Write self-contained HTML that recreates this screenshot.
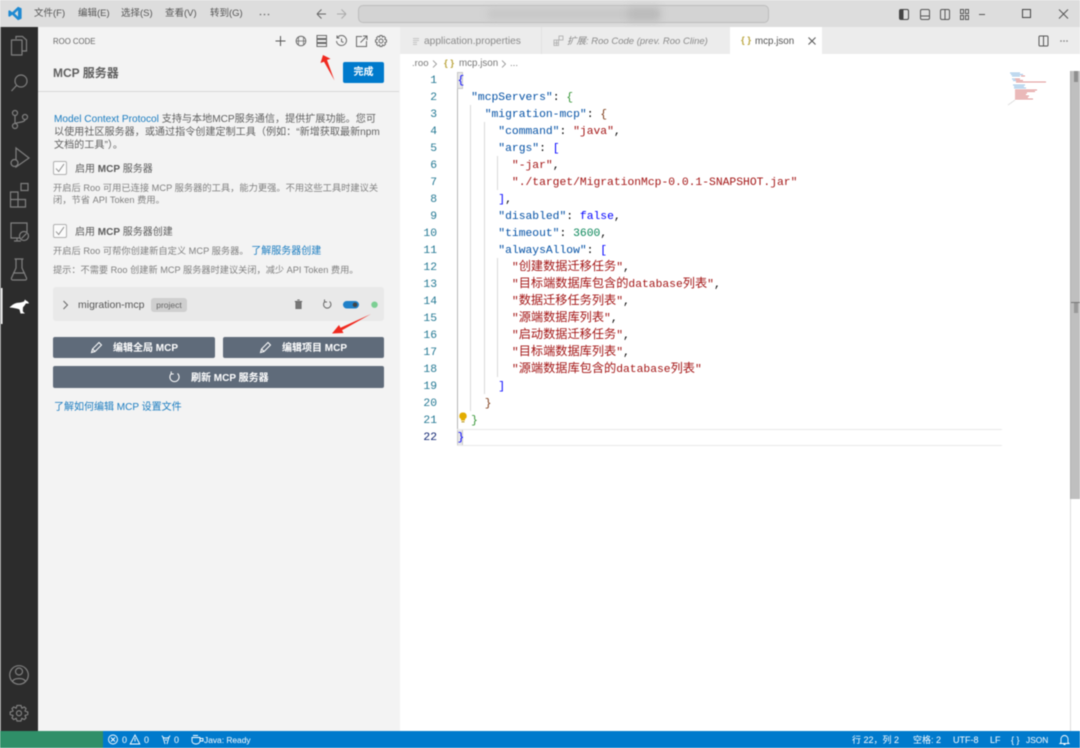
<!DOCTYPE html>
<html lang="zh"><head><meta charset="utf-8"><title>MCP</title>
<style>
*{box-sizing:border-box}
html,body{margin:0;padding:0}
body{width:1080px;height:748px;position:relative;overflow:hidden;background:#fff;font-family:"Liberation Sans","Noto Sans CJK SC",sans-serif;color:#616161}
.a{position:absolute;white-space:nowrap}
.blur{filter:blur(.4px)}
svg{position:absolute;overflow:visible}
.ln{position:absolute;left:400px;width:37px;margin-top:1px;text-align:right;color:#237893;font-family:"Liberation Mono",monospace;font-size:11.33px;line-height:17px}
.cl{position:absolute;white-space:pre;left:457.5px;height:17px;margin-top:1px;font-family:"Liberation Mono","Noto Sans CJK SC",monospace;font-size:11.33px;line-height:17px;color:#000}
.cl i{font-style:normal;font-size:12.2px;line-height:0;font-family:"Noto Sans CJK SC",sans-serif}
.k{color:#0451a5}.s{color:#a31515}.b{color:#0000ff}.n{color:#098658}
.btn{position:absolute;background:#5f6b7a;border-radius:2px}
.bt{position:absolute;white-space:nowrap;font-size:10px;line-height:15px;color:#fff;font-weight:bold}
.gd{position:absolute;width:1px;background:#d9d9d9}
.ai{fill:none;stroke:#808080;stroke-width:1.2}
.ti{fill:none;stroke:#6a6a6a;stroke-width:1}
.m{position:absolute;top:7px;font-size:9.5px;line-height:14px;color:#555;white-space:nowrap}
.st{position:absolute;top:734px;font-size:9px;line-height:13px;color:#fff;white-space:nowrap}
</style></head><body>
<div class="blur">
<!-- title bar -->
<div class="a" style="left:0;top:0;width:1080px;height:27px;background:#dddddd"></div>
<svg style="left:8px;top:6px" width="14" height="15" viewBox="0 0 14 15"><path d="M10 .8 13.6 2.400V12.600L10 14.200 4.200 8.800 1.600 10.800.4 10.200V4.800L1.600 4.200 4.200 6.200ZM10 4.400 6.600 7.500 10 10.600Z" fill="#1f8ad2"/></svg>
<div class="m" style="left:34px">文件(F)</div>
<div class="m" style="left:78px">编辑(E)</div>
<div class="m" style="left:121px">选择(S)</div>
<div class="m" style="left:165px">查看(V)</div>
<div class="m" style="left:210px">转到(G)</div>
<svg style="left:259px;top:13px" width="12" height="3" viewBox="0 0 12 3"><circle cx="1.500" cy="1.500" r=".8" fill="#666"/><circle cx="5.500" cy="1.500" r=".8" fill="#666"/><circle cx="9.500" cy="1.500" r=".8" fill="#666"/></svg>
<svg style="left:316px;top:8px" width="32" height="12" viewBox="0 0 32 12"><path d="M1 6H10M1 6 5.500 1.500M1 6 5.500 10.500" fill="none" stroke="#666" stroke-width="1"/><path d="M30 6H21M30 6 25.500 1.500M30 6 25.500 10.500" fill="none" stroke="#aaa" stroke-width="1"/></svg>
<div class="a" style="left:358px;top:5px;width:411px;height:18px;background:#d3d3d3;border:1px solid #bdbdbd;border-radius:5px"></div>
<div class="a" style="left:488px;top:9px;width:170px;height:10px;background:#c6c6c6;filter:blur(4px)"></div>
<div class="a" style="left:628px;top:8px;width:32px;height:12px;background:#bababa;filter:blur(4px)"></div>
<svg style="left:898px;top:8px" width="75" height="13" viewBox="0 0 75 13"><rect x="1.500" y="1.500" width="9" height="10" rx="1.500" fill="none" stroke="#444"/><rect x="1.500" y="1.500" width="4" height="10" fill="#444"/><rect x="22.500" y="1.500" width="9" height="10" rx="1.500" fill="none" stroke="#555"/><path d="M22.500 8H31.500" stroke="#555"/><rect x="42.500" y="1.500" width="9" height="10" rx="1.500" fill="none" stroke="#555"/><path d="M47 1.500V11.500" stroke="#555"/><rect x="62.500" y="1.500" width="3" height="4" fill="none" stroke="#555"/><rect x="62.500" y="7.500" width="3" height="4" fill="none" stroke="#555"/><rect x="67.500" y="1.500" width="3" height="4" fill="none" stroke="#555"/><rect x="67.500" y="7.500" width="3" height="4" fill="none" stroke="#555"/></svg>
<svg style="left:975px;top:8px" width="100" height="12" viewBox="0 0 100 12"><path d="M4 6.500H10" stroke="#555"/><rect x="47.500" y="1.500" width="8" height="8" fill="none" stroke="#444"/><path d="M84 1.500 93 10.500M93 1.500 84 10.500" stroke="#555"/></svg>

<!-- activity bar -->
<div class="a" style="left:0;top:27px;width:38px;height:704px;background:#2c2c2c"></div>
<div class="a" style="left:0;top:27px;width:1px;height:704px;background:#888"></div>
<svg style="left:0;top:27px" width="38" height="704" viewBox="0 0 38 704">
<g class="ai">
<g transform="translate(0 2)"><path d="M16 10V7.500H22.500L26.500 11V22H22"/><path d="M11.500 11H22V26H11.500Z" stroke-linejoin="round"/></g>
<g transform="translate(0 1)"><circle cx="21" cy="53" r="6"/><path d="M16.500 57.500 11.500 63"/></g>
<g><circle cx="15" cy="86" r="2.500"/><circle cx="15" cy="99" r="2.500"/><circle cx="25" cy="90" r="2.500"/><path d="M15 88.500V96.500M25 92.500C25 96 15 95 15 97"/></g>
<g transform="translate(0 3)"><path d="M16 118V137L29 128Z"/><circle cx="14.500" cy="133" r="3.500" fill="#2c2c2c"/></g>
<g transform="translate(0 4)"><path d="M10.500 161H18V168.500H25.500V176H10.500ZM18 168.500H10.500M18 168.500V176"/><rect x="21" y="152.500" width="7" height="7"/></g>
<g transform="translate(0 -3)"><path d="M23 214H11V199H27V208M14 217H21M17 214V217"/><circle cx="24" cy="212" r="4.500" fill="#2c2c2c"/><path d="M21.500 214.500 26.500 209.500"/></g>
<g transform="translate(0 -10)"><path d="M16 242V251L11.500 261C11 262.500 12 263 13 263H25C26 263 27 262.500 26.500 261L22 251V242M14.500 242H23.500M13 256H25"/></g>
<g transform="translate(0 -1)"><circle cx="19" cy="649" r="9.300"/><circle cx="19" cy="645.500" r="3.500"/><path d="M12.500 655.500C14 651.500 24 651.500 25.500 655.500"/></g>
<g transform="translate(0 -5)"><path d="M17 683.500H21L21.800 686.200 24.300 685 26 686.500 25 689 27.800 690V692.500L25 693.500 26 696 24.300 697.500 21.800 696.300 21 699H17L16.200 696.300 13.700 697.500 12 696 13 693.500 10.200 692.500V690L13 689 12 686.500 13.700 685 16.200 686.200Z"/><circle cx="19" cy="691.250" r="2.500"/></g>
</g>
<path d="M9.500 280.500C12 278 15 276 18 275.800C20 275.600 22 275.400 24 274.500L25 272.500 26.200 273.700C27.500 274 28.500 275 29 276.500L25.800 276.500C25 278 24 279.500 23 280.200L22.800 284C23 285 24 285.500 25 286.500L20.500 286.500 19.500 282.500C17 281.500 13.500 280.800 9.500 280.500Z" fill="#fff"/>
<rect x="1" y="261" width="1.500" height="36" fill="#fff"/>
</svg>

<!-- sidebar -->
<div class="a" style="left:38px;top:27px;width:362px;height:704px;background:#f3f3f3"></div>
<div class="a" style="left:53px;top:36px;font-size:7.800px;line-height:12px;color:#666">ROO CODE</div>
<svg style="left:274px;top:33px" width="115" height="16" viewBox="0 0 115 16"><g class="ti">
<path d="M6.500 3V13M1.500 8H11.500" stroke="#555"/>
<circle cx="27" cy="8" r="4.800"/><path d="M24.500 4V12M29.500 4V12M22.500 8H31.500" stroke-width=".8"/>
<rect x="43" y="2.500" width="9.500" height="3"/><rect x="43" y="6.500" width="9.500" height="3"/><rect x="43" y="10.500" width="9.500" height="3"/>
<path d="M63.500 4.500A5 5 0 1 1 62.500 8M63 2.500V5H65.500M67.500 5.500V8.500L69.500 9.500"/>
<path d="M88 3.500H82.500V13.500H92.500V8M86.500 9.500 92.500 3.500M89 3H93V7"/>
<circle cx="107" cy="8" r="2"/><path d="M106 2.500H108L108.500 4 110 3.300 111.500 4.800 110.800 6.300 112.500 7V9L110.800 9.700 111.500 11.200 110 12.700 108.500 12 108 13.500H106L105.500 12 104 12.700 102.500 11.200 103.200 9.700 101.500 9V7L103.200 6.300 102.500 4.800 104 3.300 105.500 4Z"/>
</g></svg>
<div class="a" style="left:53px;top:65px;font-size:12px;line-height:17px;font-weight:bold;color:#5f5f5f">MCP 服务器</div>
<div class="a" style="left:343px;top:62px;width:41px;height:21px;background:#007acc;border-radius:2px;color:#fff;font-size:10px;line-height:21px;text-align:center;font-weight:bold">完成</div>
<div class="a" style="left:38px;top:91px;width:361px;height:1px;background:#d8d8d8"></div>
<svg style="left:320px;top:55px" width="22" height="28" viewBox="0 0 22 28"><path d="M3 0 .5 8 4 6.800 14.500 25.500 7 5 10.500 3.800Z" fill="#f0291f"/></svg>

<div class="a" style="left:54px;top:112.500px;font-size:10.100px;line-height:13px;color:#616161"><span style="color:#1a7cc0">Model Context Protocol</span> 支持与本地MCP服务通信，提供扩展功能。您可<br>以使用社区服务器，或通过指令创建定制工具（例如：“新增获取最新npm<br>文档的工具”）。</div>

<div class="a" style="left:53px;top:161px;width:14px;height:14px;border:1px solid #b0b0b0;border-radius:2px;background:#fbfbfb"></div>
<svg style="left:55px;top:163px" width="10" height="10" viewBox="0 0 10 10"><path d="M1 5.500 3.700 8.500 9 1" fill="none" stroke="#888" stroke-width=".9"/></svg>
<div class="a" style="left:75px;top:162.500px;font-size:10px;line-height:14px;color:#5c5c5c">启用 <b>MCP</b> 服务器</div>
<div class="a" style="left:53px;top:181.500px;font-size:9.250px;line-height:12px;color:#808080">开启后 Roo 可用已连接 MCP 服务器的工具，能力更强。不用这些工具时建议关<br>闭，节省 API Token 费用。</div>

<div class="a" style="left:53px;top:224px;width:14px;height:14px;border:1px solid #b0b0b0;border-radius:2px;background:#fbfbfb"></div>
<svg style="left:55px;top:226px" width="10" height="10" viewBox="0 0 10 10"><path d="M1 5.500 3.700 8.500 9 1" fill="none" stroke="#888" stroke-width=".9"/></svg>
<div class="a" style="left:75px;top:226px;font-size:10px;line-height:14px;color:#5c5c5c">启用 <b>MCP</b> 服务器创建</div>
<div class="a" style="left:53px;top:245px;font-size:9.250px;line-height:13px;color:#808080">开启后 Roo 可帮你创建新自定义 MCP 服务器。 <span style="color:#1a7cc0;font-size:10px">了解服务器创建</span></div>
<div class="a" style="left:53px;top:263.500px;font-size:9.200px;line-height:13px;color:#808080">提示：不需要 Roo 创建新 MCP 服务器时建议关闭，减少 API Token 费用。</div>

<div class="a" style="left:53px;top:287px;width:331px;height:34px;background:#e9e9e9;border-radius:3px"></div>
<svg style="left:62px;top:300px" width="8" height="10" viewBox="0 0 8 10"><path d="M1.500 1 5.500 5 1.500 9" fill="none" stroke="#666"/></svg>
<div class="a" style="left:78px;top:298px;font-size:10.500px;line-height:14px;color:#555">migration-mcp</div>
<div class="a" style="left:151px;top:298px;width:36px;height:14px;background:#cfcfcf;border-radius:3px;font-size:8.500px;line-height:14px;text-align:center;color:#666">project</div>
<svg style="left:293px;top:298px" width="90" height="13" viewBox="0 0 90 13">
<path d="M1.800 3.500H9.200M3 3.500V10.500H8V3.500M4.300 2H6.700" fill="none" stroke="#666" stroke-width="1.100"/><path d="M3 4H8V10.500H3Z" fill="#777"/>
<path d="M36.500 3.500A3.700 3.700 0 1 1 32 3.500M31.500 1.500V4H34" fill="none" stroke="#666"/>
<rect x="50" y="3" width="16" height="7.500" rx="3.750" fill="#1f80c8"/><circle cx="62" cy="6.750" r="2.300" fill="#444"/>
<circle cx="81.500" cy="6.700" r="3.200" fill="#7ccf93"/></svg>
<svg style="left:331px;top:313px" width="42" height="22" viewBox="0 0 42 22"><path d="M40 1 9.500 14.800 8 12 1 20.500 12.500 20 11 17.300Z" fill="#f0291f"/></svg>

<div class="btn" style="left:53px;top:337px;width:162px;height:21px"></div>
<div class="bt" style="left:113px;top:340.500px">编辑全局 MCP</div>
<svg style="left:90px;top:341px" width="13" height="13" viewBox="0 0 13 13"><path d="M1.500 11.500 2.500 8 9 1.500 11.500 4 5 10.500ZM2.500 8 5 10.500" fill="none" stroke="#fff" stroke-width="1"/></svg>
<div class="btn" style="left:223px;top:337px;width:161px;height:21px"></div>
<div class="bt" style="left:282px;top:340.500px">编辑项目 MCP</div>
<svg style="left:259px;top:341px" width="13" height="13" viewBox="0 0 13 13"><path d="M1.500 11.500 2.500 8 9 1.500 11.500 4 5 10.500ZM2.500 8 5 10.500" fill="none" stroke="#fff" stroke-width="1"/></svg>
<div class="btn" style="left:53px;top:366px;width:331px;height:22px"></div>
<div class="bt" style="left:191px;top:370.500px">刷新 MCP 服务器</div>
<svg style="left:168px;top:371px" width="13" height="12" viewBox="0 0 13 12"><path d="M9.500 2.500A4.600 4.600 0 1 1 3.500 2.500M3.200 .5V3H5.700" fill="none" stroke="#fff" stroke-width="1"/></svg>
<div class="a" style="left:54px;top:401px;font-size:10px;line-height:14px;color:#1a7cc0">了解如何编辑 MCP 设置文件</div>

<!-- tabs -->
<div class="a" style="left:400px;top:27px;width:680px;height:27px;background:#ececec"></div>
<div class="a" style="left:541px;top:27px;width:1px;height:27px;background:#e2e2e2"></div>
<div class="a" style="left:730px;top:27px;width:92px;height:27px;background:#fff"></div>
<svg style="left:412px;top:37px" width="9" height="9" viewBox="0 0 9 9"><path d="M1 1.500H7M1 3.500H7M1 5.500H5M1 7.500H5" stroke="#c4c4c4"/></svg>
<div class="a" style="left:424px;top:35px;font-size:10.200px;line-height:14px;color:#8a8a8a">application.properties</div>
<svg style="left:553px;top:35px" width="11" height="12" viewBox="0 0 11 12"><path d="M1 5H5.500V10.500H1ZM1 8H5.500M3.500 5V10.500" fill="none" stroke="#aaa" stroke-width=".8"/><rect x="6" y="1" width="4" height="4" fill="none" stroke="#aaa" stroke-width=".8"/></svg>
<div class="a" style="left:567px;top:35px;font-size:9.500px;line-height:14px;color:#8a8a8a;font-style:italic">扩展: Roo Code (prev. Roo Cline)</div>
<div class="a" style="left:741px;top:34px;font-size:9.500px;line-height:14px;color:#bda844;font-weight:bold">{ }</div>
<div class="a" style="left:755px;top:35px;font-size:9.800px;line-height:14px;color:#555">mcp.json</div>
<svg style="left:808px;top:37px" width="8" height="8" viewBox="0 0 8 8"><path d="M.5.500 7.500 7.500M7.500.5.500 7.500" stroke="#555"/></svg>
<svg style="left:1038px;top:35px" width="32" height="12" viewBox="0 0 32 12"><rect x="1" y="1" width="9" height="10" rx="1" fill="none" stroke="#555"/><path d="M5.500 1V11" stroke="#555"/><circle cx="23" cy="6" r=".8" fill="#777"/><circle cx="26" cy="6" r=".8" fill="#777"/><circle cx="29" cy="6" r=".8" fill="#777"/></svg>

<!-- breadcrumb -->
<div class="a" style="left:412px;top:57px;font-size:9.600px;line-height:14px;color:#777">.roo</div>
<svg style="left:432px;top:60px" width="6" height="8" viewBox="0 0 6 8"><path d="M1 .5 4.500 4 1 7.500" fill="none" stroke="#888" stroke-width=".8"/></svg>
<div class="a" style="left:444px;top:57px;font-size:9.600px;line-height:14px;color:#bda844;font-weight:bold">{ }</div>
<div class="a" style="left:459px;top:57px;font-size:9.800px;line-height:14px;color:#777">mcp.json</div>
<svg style="left:501px;top:60px" width="6" height="8" viewBox="0 0 6 8"><path d="M1 .5 4.500 4 1 7.500" fill="none" stroke="#888" stroke-width=".8"/></svg>
<div class="a" style="left:510px;top:57px;font-size:9.600px;line-height:14px;color:#777">...</div>

<!-- editor line numbers -->
<div class="ln" style="top:72px">1</div><div class="ln" style="top:89px">2</div><div class="ln" style="top:106px">3</div><div class="ln" style="top:123px">4</div><div class="ln" style="top:140px">5</div><div class="ln" style="top:157px">6</div><div class="ln" style="top:174px">7</div><div class="ln" style="top:191px">8</div><div class="ln" style="top:208px">9</div><div class="ln" style="top:225px">10</div><div class="ln" style="top:242px">11</div><div class="ln" style="top:259px">12</div><div class="ln" style="top:276px">13</div><div class="ln" style="top:293px">14</div><div class="ln" style="top:310px">15</div><div class="ln" style="top:327px">16</div><div class="ln" style="top:344px">17</div><div class="ln" style="top:361px">18</div><div class="ln" style="top:378px">19</div><div class="ln" style="top:395px">20</div><div class="ln" style="top:412px">21</div><div class="ln" style="top:429px;color:#0b216f">22</div>

<!-- indent guides -->
<div class="gd" style="left:457px;top:88px;height:344px;background:#b5b5b5"></div>
<div class="gd" style="left:470px;top:105px;height:306px"></div>
<div class="gd" style="left:484px;top:122px;height:272px"></div>
<div class="gd" style="left:497px;top:156px;height:34px"></div>
<div class="gd" style="left:497px;top:258px;height:119px"></div>
<div class="a" style="left:457px;top:72px;width:6px;height:17px;background:#e8e8e8;border:1px solid #c8c8c8"></div>
<div class="a" style="left:457px;top:429px;width:6px;height:17px;background:#e8e8e8;border:1px solid #c8c8c8"></div>
<div class="a" style="left:457px;top:429px;width:545px;height:17px;border-top:1px solid #eaeaea;border-bottom:1px solid #eaeaea"></div>

<!-- code -->
<div class="cl" style="top:72px"><span class="b">{</span></div>
<div class="cl" style="top:89px">  <span class="k">"mcpServers"</span>: <span style="color:#319331">{</span></div>
<div class="cl" style="top:106px">    <span class="k">"migration-mcp"</span>: <span style="color:#7b3814">{</span></div>
<div class="cl" style="top:123px">      <span class="k">"command"</span>: <span class="s">"java"</span>,</div>
<div class="cl" style="top:140px">      <span class="k">"args"</span>: <span class="b">[</span></div>
<div class="cl" style="top:157px">        <span class="s">"-jar"</span>,</div>
<div class="cl" style="top:174px">        <span class="s">"./target/MigrationMcp-0.0.1-SNAPSHOT.jar"</span></div>
<div class="cl" style="top:191px">      <span class="b">]</span>,</div>
<div class="cl" style="top:208px">      <span class="k">"disabled"</span>: <span class="b">false</span>,</div>
<div class="cl" style="top:225px">      <span class="k">"timeout"</span>: <span class="n">3600</span>,</div>
<div class="cl" style="top:242px">      <span class="k">"alwaysAllow"</span>: <span class="b">[</span></div>
<div class="cl" style="top:259px">        <span class="s">"<i>创建数据迁移任务</i>"</span>,</div>
<div class="cl" style="top:276px">        <span class="s">"<i>目标端数据库包含的</i>database<i>列表</i>"</span>,</div>
<div class="cl" style="top:293px">        <span class="s">"<i>数据迁移任务列表</i>"</span>,</div>
<div class="cl" style="top:310px">        <span class="s">"<i>源端数据库列表</i>"</span>,</div>
<div class="cl" style="top:327px">        <span class="s">"<i>启动数据迁移任务</i>"</span>,</div>
<div class="cl" style="top:344px">        <span class="s">"<i>目标端数据库列表</i>"</span>,</div>
<div class="cl" style="top:361px">        <span class="s">"<i>源端数据库包含的</i>database<i>列表</i>"</span></div>
<div class="cl" style="top:378px">      <span class="b">]</span></div>
<div class="cl" style="top:395px">    <span style="color:#7b3814">}</span></div>
<div class="cl" style="top:412px">  <span style="color:#319331">}</span></div>
<div class="cl" style="top:429px"><span class="b">}</span></div>
<svg style="left:459px;top:412px" width="8" height="11" viewBox="0 0 8 11"><path d="M4 .5A3.500 3.500 0 0 1 6 7V8.500H2V7A3.500 3.500 0 0 1 4 .5Z" fill="#e2ac00"/><path d="M2.500 9.800H5.500" stroke="#b08a00"/></svg>

<!-- minimap -->
<svg style="left:1005px;top:68px;opacity:.65" width="60" height="42" viewBox="0 0 60 42">
<g stroke-width="1" fill="none">
<path d="M5 5H15M6 6.500H18M7 8H15M7 11H13M8 12.500H12M8 17H20M9 18.500H19M9 20H21" stroke="#6fa8dc"/>
<path d="M16 8H20M10 11H15M11 12.500H18M11 14H41M10 22H32M10 23.500H30M10 25H22M10 26.500H21M10 28H24M10 29.500H23M10 31H28" stroke="#cf5f5f"/>
<path d="M3 37 10 32" stroke="#ccc"/>
</g></svg>

<!-- scrollbar -->
<div class="a" style="left:1070px;top:71px;width:10px;height:428px;background:#bfbfbf;border-left:1px solid #b0b0b0"></div>
<div class="a" style="left:1074px;top:71px;width:4px;height:11px;background:#8f8f8f"></div>
<div class="a" style="left:1071px;top:302px;width:9px;height:1px;background:#777"></div>
<div class="a" style="left:1074px;top:303px;width:4px;height:10px;background:#999"></div>
<div class="a" style="left:1070px;top:499px;width:1px;height:232px;background:#ddd"></div>

<!-- status bar -->
<div class="a" style="left:0;top:731px;width:1080px;height:17px;background:#007acc"></div>
<div class="a" style="left:0;top:731px;width:103px;height:17px;background:#2f8f68"></div>
<svg style="left:108px;top:734px" width="100" height="12" viewBox="0 0 100 12"><g fill="none" stroke="#fff" stroke-width=".9"><circle cx="5" cy="5.500" r="4.500"/><path d="M3 3.500 7 7.500M7 3.500 3 7.500"/><path d="M27 1 31.800 10H22.200Z"/><path d="M27 4V7.500"/><path d="M55 3 57 10M61 3 59 10M54 1.500C55 5 61 5 62 1.500M57 6H59"/></g><path d="M84 3.500H92V7C92 9 90 10 88 10S84 9 84 7ZM92 4.500H95V7H92M85 1.500H90" fill="none" stroke="#fff" stroke-width=".9"/></svg>
<div class="st" style="left:122px">0</div>
<div class="st" style="left:144px">0</div>
<div class="st" style="left:174px">0</div>
<div class="st" style="left:204px;font-size:8.400px">Java: Ready</div>
<div class="st" style="left:852px">行 22，列 2</div>
<div class="st" style="left:913px">空格: 2</div>
<div class="st" style="left:953px">UTF-8</div>
<div class="st" style="left:990px">LF</div>
<div class="st" style="left:1011px">{ }</div>
<div class="st" style="left:1026px;font-size:8.400px">JSON</div>
<svg style="left:1059px;top:734px" width="11" height="12" viewBox="0 0 11 12"><path d="M2 8.500V5A3.500 3.500 0 0 1 9 5V8.500L10 9.500H1ZM4.500 10.500H6.500" fill="none" stroke="#fff" stroke-width=".9"/></svg>
</div>
</body></html>
